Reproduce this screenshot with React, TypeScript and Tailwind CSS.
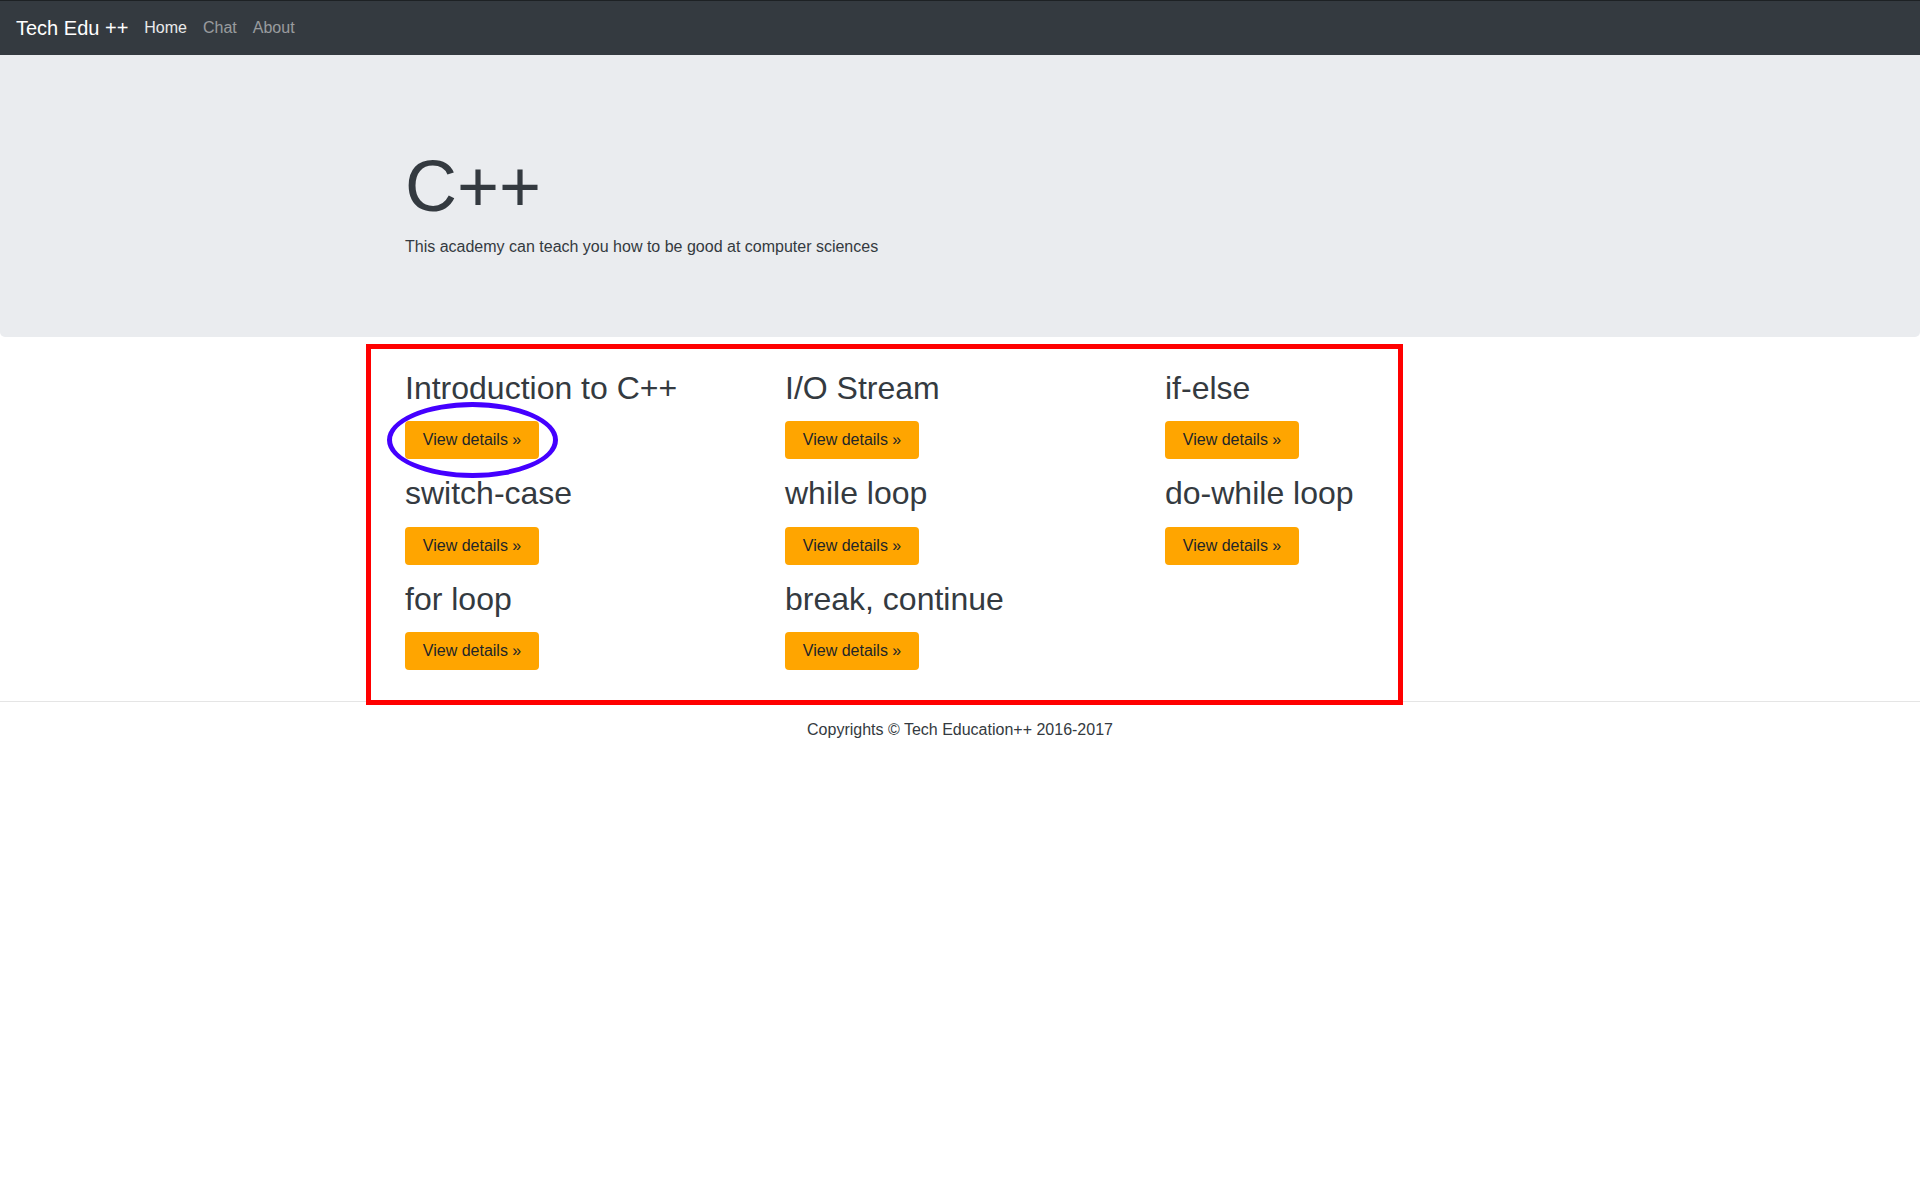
import React from "react";

const topics: string[] = [
  "Introduction to C++",
  "I/O Stream",
  "if-else",
  "switch-case",
  "while loop",
  "do-while loop",
  "for loop",
  "break, continue",
];

function Topic({ title }: { title: string }) {
  return (
    <div className="px-[15px]">
      <h2 className="mb-[14px] text-[32px] leading-[38.4px] font-normal text-[#343a40]">{title}</h2>
      <div className="mb-[15px] flex">
        <a
          href="#"
          className="inline-flex h-[38px] items-center rounded-[4px] bg-[#ffa500] px-[17.8px] text-[16px] leading-6 text-[#212529]"
        >
          View details »
        </a>
      </div>
    </div>
  );
}

export default function App() {
  return (
    <div
      className="relative min-h-screen bg-white text-[#343a40]"
      style={{ fontFamily: '"Liberation Sans", Arial, sans-serif' }}
    >
      <nav className="flex h-[55px] items-center border-t border-[#1d2124] bg-[#343a40] px-4">
        <a href="#" className="mr-2 text-[20px] leading-[30px] text-white">
          Tech Edu ++
        </a>
        <a href="#" className="px-2 text-[16px] leading-6 text-white/90">
          Home
        </a>
        <a href="#" className="px-2 text-[16px] leading-6 text-white/50">
          Chat
        </a>
        <a href="#" className="px-2 text-[16px] leading-6 text-white/50">
          About
        </a>
      </nav>

      <section className="rounded-b-[5px] bg-[#eaecef] pt-[88px] pb-[78px]">
        <div className="mx-auto w-[1140px] px-[15px]">
          <h1 className="mb-[6px] text-[72px] leading-[86px] font-light text-[#343a40]">C++</h1>
          <p className="text-[16px] leading-6 text-[#343a40]">
            This academy can teach you how to be good at computer sciences
          </p>
        </div>
      </section>

      <main className="mx-auto grid w-[1140px] grid-cols-3 pt-8">
        {topics.map((t) => (
          <Topic key={t} title={t} />
        ))}
      </main>

      <hr className="mt-4 border-0 border-t border-[rgba(0,0,0,0.1)]" />

      <footer className="mt-4">
        <p className="text-center text-[16px] leading-6 text-[#343a40]">
          Copyrights © Tech Education++ 2016-2017
        </p>
      </footer>

      {/* annotation overlays */}
      <div className="pointer-events-none absolute top-[344px] left-[366px] h-[361px] w-[1037px] border-[5.5px] border-[#ff0000]" />
      <div className="pointer-events-none absolute top-[402px] left-[387px] h-[76px] w-[171px] rounded-[50%] border-[5px] border-[#4400ff]" />
    </div>
  );
}
